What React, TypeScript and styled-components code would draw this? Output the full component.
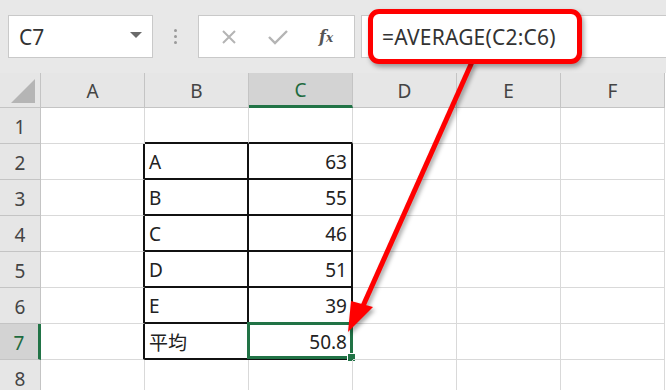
import styled, { createGlobalStyle, css } from 'styled-components';

const GlobalStyle = createGlobalStyle`
    body {
        margin: 0;
        background: #fff;
        overflow: hidden;
    }
`;

const Page = styled.div`
    position: relative;
    width: 666px;
    height: 390px;
    overflow: hidden;
    font-family: 'Noto Sans', 'Noto Sans CJK JP', sans-serif;
    color: #222;
`;

const Toolbar = styled.div`
    display: flex;
    align-items: stretch;
    height: 73px;
    box-sizing: border-box;
    padding: 15px 0 15px 8px;
    background: #e8e8e8;
`;

const NameBox = styled.div`
    width: 145px;
    display: flex;
    align-items: center;
    justify-content: space-between;
    box-sizing: border-box;
    padding: 0 10px 0 10px;
    background: #fff;
    border: 1px solid #c9c9c9;
    font-size: 21px;
    color: #333;
`;

const DropArrow = styled.span`
    width: 0;
    height: 0;
    border-left: 6px solid transparent;
    border-right: 6px solid transparent;
    border-top: 6px solid #6a6a6a;
    margin-bottom: 4px;
`;

const Grip = styled.div`
    width: 45px;
    display: flex;
    flex-direction: column;
    align-items: center;
    justify-content: center;
    gap: 3px;
    & > span {
        width: 3px;
        height: 3px;
        border-radius: 50%;
        background: #9a9a9a;
    }
`;

const ButtonBox = styled.div`
    width: 157px;
    display: flex;
    align-items: center;
    justify-content: space-around;
    box-sizing: border-box;
    padding: 0 6px;
    background: #fff;
    border: 1px solid #c9c9c9;
`;

const Fx = styled.span`
    font-family: 'DejaVu Serif', 'Liberation Serif', serif;
    font-style: italic;
    font-weight: bold;
    font-size: 16px;
    color: #555;
    & > small {
        font-size: 12px;
    }
`;

const FormulaBox = styled.div`
    flex: 1;
    margin-left: 6px;
    display: flex;
    align-items: center;
    padding-left: 6px;
    background: #fff;
    border: 1px solid #c9c9c9;
    border-right: none;
`;

const Callout = styled.div`
    height: 55px;
    width: 214px;
    box-sizing: border-box;
    display: flex;
    align-items: center;
    padding-left: 9px;
    border: 5px solid #ff0000;
    border-radius: 11px;
    background: #fff;
    box-shadow: 2px 3px 5px rgba(0, 0, 0, 0.35);
    font-size: 21px;
    color: #333;
    letter-spacing: 0.2px;
    position: relative;
    z-index: 2;
`;

const Sheet = styled.div`
    display: grid;
    grid-template-columns: 41px repeat(6, 104px);
    grid-template-rows: 35px repeat(8, 36px);
`;

const Cell = styled.div<{ $right: string; $bottom: string; $align?: 'left' | 'right' }>`
    position: relative;
    box-sizing: border-box;
    display: flex;
    align-items: center;
    justify-content: ${(p) => (p.$align === 'right' ? 'flex-end' : 'flex-start')};
    padding: 2px 4px 0 4px;
    font-size: 19px;
    border-right: ${(p) => p.$right};
    border-bottom: ${(p) => p.$bottom};
`;

const Head = styled.div<{ $active?: boolean; $side?: 'col' | 'row' }>`
    box-sizing: border-box;
    display: flex;
    align-items: center;
    justify-content: center;
    padding-top: 2px;
    font-size: 19px;
    color: #444;
    background: #e6e6e6;
    border-right: 1px solid #c4c4c4;
    border-bottom: 1px solid #c4c4c4;
    ${(p) =>
        p.$active &&
        css`
            background: #d3d3d3;
            color: #1e6b3f;
        `}
    ${(p) =>
        p.$active &&
        p.$side === 'col' &&
        css`
            border-bottom: 3px solid #217346;
        `}
    ${(p) =>
        p.$active &&
        p.$side === 'row' &&
        css`
            border-right: 3px solid #217346;
        `}
`;

const Corner = styled.div`
    position: relative;
    background: #e6e6e6;
    border-right: 1px solid #c4c4c4;
    border-bottom: 1px solid #c4c4c4;
    box-sizing: border-box;
    &::after {
        content: '';
        position: absolute;
        right: 5px;
        bottom: 4px;
        width: 24px;
        height: 24px;
        background: #b5b5b5;
        clip-path: polygon(100% 0, 100% 100%, 0 100%);
    }
`;

const Selection = styled.div`
    position: absolute;
    inset: -2px -2px -1px -2px;
    border: 3px solid #217346;
    pointer-events: none;
    &::after {
        content: '';
        position: absolute;
        right: -6px;
        bottom: -6px;
        width: 7px;
        height: 7px;
        background: #217346;
        border: 1px solid #fff;
    }
`;

const Overlay = styled.svg`
    position: absolute;
    left: 0;
    top: 0;
    pointer-events: none;
    filter: drop-shadow(2px 3px 2px rgba(0, 0, 0, 0.35));
`;

const cols = ['A', 'B', 'C', 'D', 'E', 'F'];
const table: Record<number, [string, string]> = {
    2: ['A', '63'],
    3: ['B', '55'],
    4: ['C', '46'],
    5: ['D', '51'],
    6: ['E', '39'],
    7: ['平均', '50.8'],
};

const GRID = '1px solid #d9d9d9';
const INK = '2px solid #111';

const inTable = (r: number, c: number) => r >= 2 && r <= 7 && (c === 1 || c === 2);

const App = () => {
    const rows = [1, 2, 3, 4, 5, 6, 7, 8];
    return (
        <Page>
            <GlobalStyle />
            <Toolbar>
                <NameBox>
                    C7
                    <DropArrow />
                </NameBox>
                <Grip>
                    <span />
                    <span />
                    <span />
                </Grip>
                <ButtonBox>
                    <svg width="18" height="18" viewBox="0 0 18 18">
                        <path d="M3 3 L15 15 M15 3 L3 15" stroke="#b4b4b4" strokeWidth="2" fill="none" />
                    </svg>
                    <svg width="22" height="18" viewBox="0 0 22 18">
                        <path d="M2 9 L8 15 L20 3" stroke="#b4b4b4" strokeWidth="2.4" fill="none" />
                    </svg>
                    <Fx>
                        f<small>x</small>
                    </Fx>
                </ButtonBox>
                <FormulaBox>
                    <Callout>=AVERAGE(C2:C6)</Callout>
                </FormulaBox>
            </Toolbar>
            <Sheet>
                <Corner />
                {cols.map((c) => (
                    <Head key={c} $side="col" $active={c === 'C'}>
                        {c}
                    </Head>
                ))}
                {rows.map((r) => [
                    <Head key={`h${r}`} $side="row" $active={r === 7}>
                        {r}
                    </Head>,
                    ...cols.map((_, c) => {
                        const right = inTable(r, c) || inTable(r, c + 1) ? INK : GRID;
                        const bottom = inTable(r, c) || inTable(r + 1, c) ? INK : GRID;
                        const data = table[r];
                        let text = '';
                        if (data && c === 1) text = data[0];
                        if (data && c === 2) text = data[1];
                        return (
                            <Cell key={`${r}-${c}`} $right={right} $bottom={bottom} $align={c === 2 ? 'right' : 'left'}>
                                {text}
                                {r === 7 && c === 2 && <Selection />}
                            </Cell>
                        );
                    }),
                ])}
            </Sheet>
            <Overlay width="666" height="390" viewBox="0 0 666 390">
                <line x1="472" y1="62" x2="363" y2="306" stroke="#ff0000" strokeWidth="5" />
                <polygon points="348,332 351,301 373,307" fill="#ff0000" />
            </Overlay>
        </Page>
    );
};

export default App;
